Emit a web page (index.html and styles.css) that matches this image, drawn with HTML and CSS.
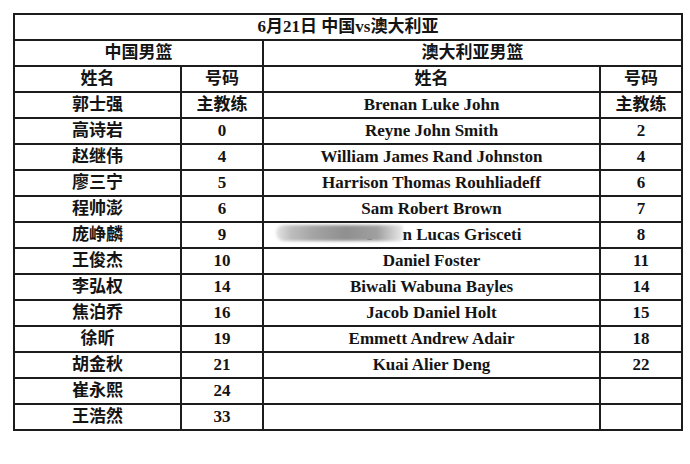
FILE: index.html
```html
<!DOCTYPE html>
<html lang="zh-CN">
<head>
<meta charset="utf-8">
<title>6月21日 中国vs澳大利亚</title>
<link rel="stylesheet" href="styles.css">
</head>
<body>
<table class="roster">
  <colgroup>
    <col class="c-name-cn">
    <col class="c-num-cn">
    <col class="c-name-au">
    <col class="c-num-au">
  </colgroup>
  <tr class="row"><th colspan="4" class="title">6月21日 中国vs澳大利亚</th></tr>
  <tr class="row"><th colspan="2">中国男篮</th><th colspan="2">澳大利亚男篮</th></tr>
  <tr class="row"><th>姓名</th><th>号码</th><th>姓名</th><th>号码</th></tr>
  <tr class="row"><td>郭士强</td><td>主教练</td><td>Brenan Luke John</td><td>主教练</td></tr>
  <tr class="row"><td>高诗岩</td><td>0</td><td>Reyne John Smith</td><td>2</td></tr>
  <tr class="row"><td>赵继伟</td><td>4</td><td>William James Rand Johnston</td><td>4</td></tr>
  <tr class="row"><td>廖三宁</td><td>5</td><td>Harrison Thomas Rouhliadeff</td><td>6</td></tr>
  <tr class="row"><td>程帅澎</td><td>6</td><td>Sam Robert Brown</td><td>7</td></tr>
  <tr class="row"><td>庞峥麟</td><td>9</td><td><span class="masked">J</span>n Lucas Grisceti</td><td>8</td></tr>
  <tr class="row"><td>王俊杰</td><td>10</td><td>Daniel Foster</td><td>11</td></tr>
  <tr class="row"><td>李弘权</td><td>14</td><td>Biwali Wabuna Bayles</td><td>14</td></tr>
  <tr class="row"><td>焦泊乔</td><td>16</td><td>Jacob Daniel Holt</td><td>15</td></tr>
  <tr class="row"><td>徐昕</td><td>19</td><td>Emmett Andrew Adair</td><td>18</td></tr>
  <tr class="row"><td>胡金秋</td><td>21</td><td>Kuai Alier Deng</td><td>22</td></tr>
  <tr class="row"><td>崔永熙</td><td>24</td><td></td><td></td></tr>
  <tr class="row"><td>王浩然</td><td>33</td><td></td><td></td></tr>
</table>
</body>
</html>
```

FILE: styles.css
```css
html, body {
  margin: 0;
  background: #ffffff;
}

body {
  padding: 13px 0 0 13px;
  font-family: "Liberation Serif", "Noto Sans CJK SC", serif;
  font-weight: 700;
  font-size: 17px;
  color: #141414;
}

.roster {
  border-collapse: collapse;
  table-layout: fixed;
  width: 668px;
}

.c-name-cn { width: 167px; }
.c-num-cn  { width: 82px; }
.c-name-au { width: 337px; }
.c-num-au  { width: 82px; }

.row { height: 26px; }

.roster th,
.roster td {
  border: 2px solid #1c1c1c;
  padding: 0;
  text-align: center;
  vertical-align: middle;
  line-height: 20px;
  font-weight: 700;
  white-space: nowrap;
}

.masked {
  display: inline-block;
  position: relative;
  width: 61px;
  padding-left: 25px;
  box-sizing: border-box;
  text-align: left;
}

.masked::before {
  content: "";
  position: absolute;
  left: -66px;
  right: 0;
  top: 0;
  height: 16px;
  border-radius: 8px 3px 3px 8px;
  background: linear-gradient(to right,
    #e4e4e4 0%, #bdbdbd 12%, #a3a3a3 30%, #8f8f8f 55%,
    #a0a0a0 80%, rgba(220,220,220,0.6) 100%);
  filter: blur(1.5px);
  z-index: 1;
}
```
